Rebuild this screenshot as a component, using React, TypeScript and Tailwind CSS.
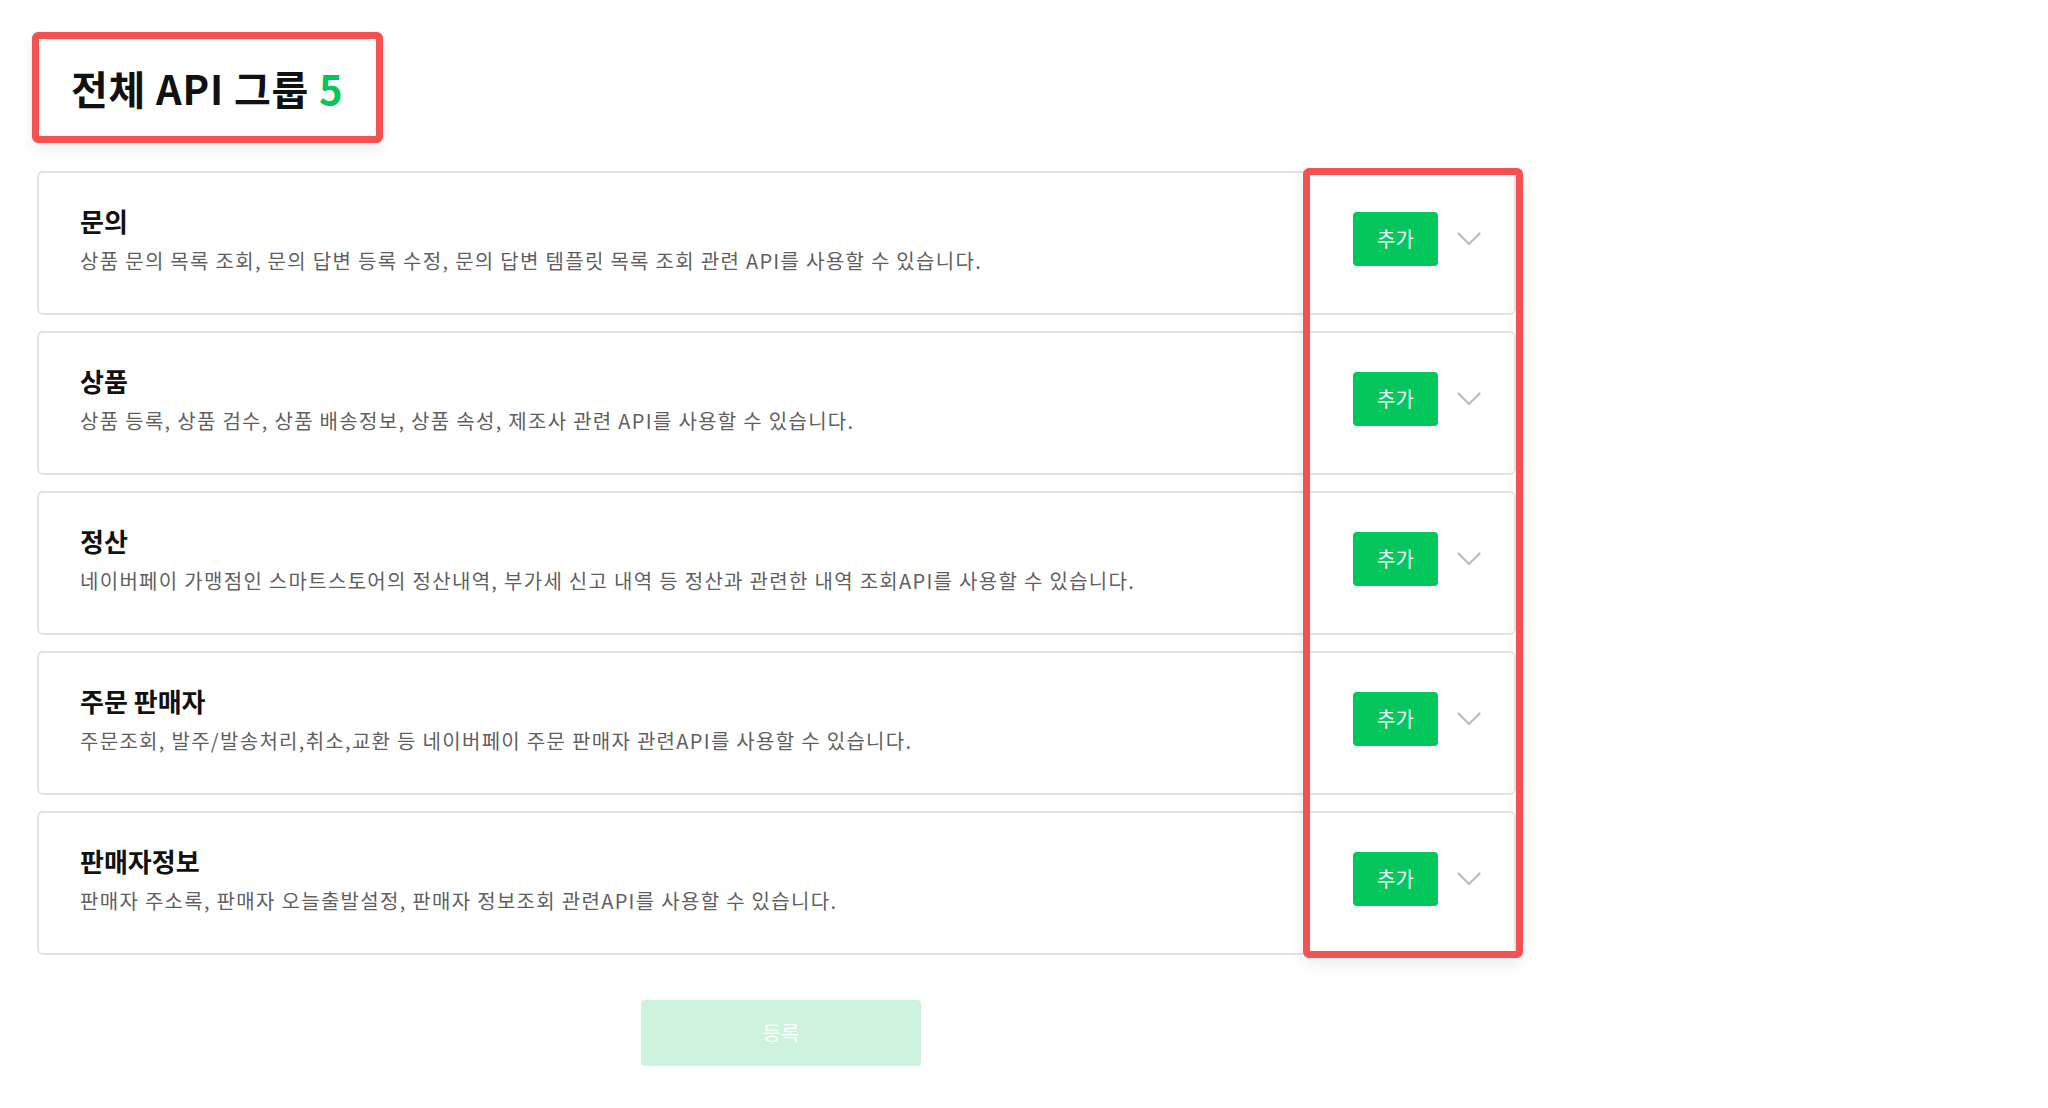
const groups = [
  { name: '문의', desc: '상품 문의 목록 조회, 문의 답변 등록 수정, 문의 답변 템플릿 목록 조회 관련 API를 사용할 수 있습니다.' },
  { name: '상품', desc: '상품 등록, 상품 검수, 상품 배송정보, 상품 속성, 제조사 관련 API를 사용할 수 있습니다.' },
  { name: '정산', desc: '네이버페이 가맹점인 스마트스토어의 정산내역, 부가세 신고 내역 등 정산과 관련한 내역 조회API를 사용할 수 있습니다.' },
  { name: '주문 판매자', desc: '주문조회, 발주/발송처리,취소,교환 등 네이버페이 주문 판매자 관련API를 사용할 수 있습니다.' },
  { name: '판매자정보', desc: '판매자 주소록, 판매자 오늘출발설정, 판매자 정보조회 관련API를 사용할 수 있습니다.' },
]

const Chevron = () => (
  <svg width="24" height="14" viewBox="0 0 24 14" className="ml-[19px]" fill="none">
    <polyline points="1.5,1.5 12,12 22.5,1.5" stroke="#bdbdbd" strokeWidth="2.2" strokeLinecap="round" strokeLinejoin="round" />
  </svg>
)

const GroupCard = ({ name, desc }: { name: string; desc: string }) => (
  <div className="h-[144px] border-2 border-[#e2e2e2] rounded-md flex items-center pl-[41px] pr-[33px] pb-[9px]">
    <div className="flex-1">
      <div className="text-[26px] leading-[34px] font-bold text-[#111]">{name}</div>
      <div className="mt-[10px] text-[20px] leading-[26px] text-[#5f5f5f] tracking-[1.3px]">{desc}</div>
    </div>
    <button className="w-[85px] h-[54px] rounded-[4px] bg-[#03c75a] text-white text-[20px]">추가</button>
    <Chevron />
  </div>
)

export default function App() {
  return (
    <div
      className="relative min-h-[1108px] w-full bg-white"
      style={{ fontFamily: '"Noto Sans CJK KR", "Noto Sans", sans-serif' }}
    >
      <div className="pl-[32px] pt-[32px]">
        <div className="w-[351px] h-[111px] border-[7px] border-[#f45252] rounded-md shadow-[0_6px_14px_rgba(0,0,0,0.08)] flex items-center pl-[32px]">
          <h1 className="text-[40px] font-bold text-[#111] tracking-[0.8px]">
            전체 API 그룹 <span className="text-[#03c75a]">5</span>
          </h1>
        </div>
      </div>

      <div className="ml-[37px] mt-[28px] w-[1479px] flex flex-col gap-[16px]">
        {groups.map((g) => (
          <GroupCard key={g.name} name={g.name} desc={g.desc} />
        ))}
      </div>

      <div className="ml-[641px] mt-[45px]">
        <button className="w-[280px] h-[66px] rounded-[4px] bg-[#cdf3de] text-white text-[20px]">등록</button>
      </div>

      {/* annotation box over the right column */}
      <div className="absolute left-[1303px] top-[168px] w-[220px] h-[790px] border-[7px] border-[#f45252] rounded-md shadow-[0_6px_16px_rgba(0,0,0,0.08)]" />
    </div>
  )
}
